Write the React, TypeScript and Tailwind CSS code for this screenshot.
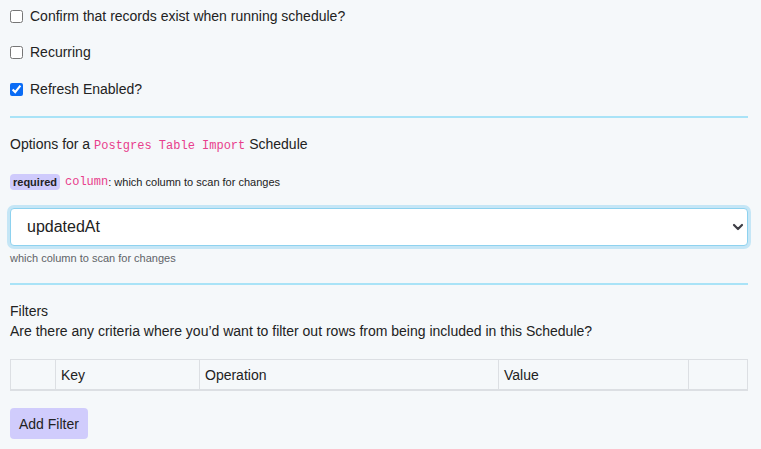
import { useState } from "react";

const checks = [
  { label: "Confirm that records exist when running schedule?", checked: false },
  { label: "Recurring", checked: false },
  { label: "Refresh Enabled?", checked: true },
];

const columns = [
  { name: "", width: "w-[45px]" },
  { name: "Key", width: "w-[144px]" },
  { name: "Operation", width: "w-[299px]" },
  { name: "Value", width: "w-[190px]" },
  { name: "", width: "flex-1" },
];

export default function App() {
  const [values, setValues] = useState(checks.map((c) => c.checked));

  return (
    <div className="min-h-screen bg-[#f5f8fa] text-[#222] font-['Liberation_Sans',Helvetica,Arial,sans-serif]">
      <div className="w-[738px] ml-[10px] pt-[6px] pb-4">
        {/* CHECKBOXES */}
        <div className="flex flex-col">
          {checks.map((c, i) => (
            <label
              key={c.label}
              className={`flex items-center h-5 text-sm ${i === 1 ? "mt-4" : i === 2 ? "mt-[17px]" : ""}`}
            >
              <input
                type="checkbox"
                checked={values[i]}
                onChange={() =>
                  setValues(values.map((v, j) => (j === i ? !v : v)))
                }
                className="w-[13px] h-[13px] m-0 mr-[7px] accent-[#0a6cf5]"
              />
              {c.label}
            </label>
          ))}
        </div>

        <div className="mt-[17px] border-t-2 border-[#a9e3f7]" />

        {/* OPTIONS */}
        <p className="mt-4 h-5 leading-5 text-sm">
          Options for a{" "}
          <code className="font-['Liberation_Mono',Menlo,monospace] text-[12px] text-[#e83e8c]">
            Postgres Table Import
          </code>{" "}
          Schedule
        </p>

        <div className="mt-5 flex items-center h-4 text-[11px]">
          <span className="bg-[#cfcbfc] rounded-[4px] px-[3px] h-4 leading-4 font-bold">
            required
          </span>
          <code className="ml-[5px] font-['Liberation_Mono',Menlo,monospace] text-[12px] text-[#e83e8c]">
            column
          </code>
          <span>: which column to scan for changes</span>
        </div>

        {/* SELECT */}
        <div className="relative mt-[18px]">
          <select
            defaultValue="updatedAt"
            className="appearance-none w-full h-[38px] bg-white border border-[#8ed2ef] rounded-[4px] pl-4 pr-8 text-base text-[#222] outline-none ring-[3px] ring-[#c5e6f6]"
          >
            <option>updatedAt</option>
            <option>createdAt</option>
          </select>
          <svg
            className="absolute right-[4px] top-[14px] pointer-events-none"
            width="12"
            height="10"
            viewBox="0 0 12 10"
          >
            <path
              d="M2 3 L6 7 L10 3"
              fill="none"
              stroke="#3d3d45"
              strokeWidth="2.2"
              strokeLinecap="round"
              strokeLinejoin="round"
            />
          </svg>
        </div>
        <p className="mt-[5px] text-[11px] leading-[14px] text-[#5f6368]">
          which column to scan for changes
        </p>

        <div className="mt-[18px] border-t-2 border-[#a9e3f7]" />

        {/* FILTERS */}
        <p className="mt-4 text-sm leading-5">Filters</p>
        <p className="text-sm leading-5">
          Are there any criteria where you’d want to filter out rows from being
          included in this Schedule?
        </p>

        <div className="mt-[18px] flex h-8 border border-b-2 border-[#dcdfe3] text-sm">
          {columns.map((col, i) => (
            <div
              key={i}
              className={`${col.width} flex items-center pl-[5px] ${i < columns.length - 1 ? "border-r border-[#dcdfe3]" : ""}`}
            >
              {col.name}
            </div>
          ))}
        </div>

        <button className="mt-[17px] h-[31px] px-[9px] rounded-[4px] bg-[#d0ccfc] text-sm text-[#222]">
          Add Filter
        </button>
      </div>
    </div>
  );
}
